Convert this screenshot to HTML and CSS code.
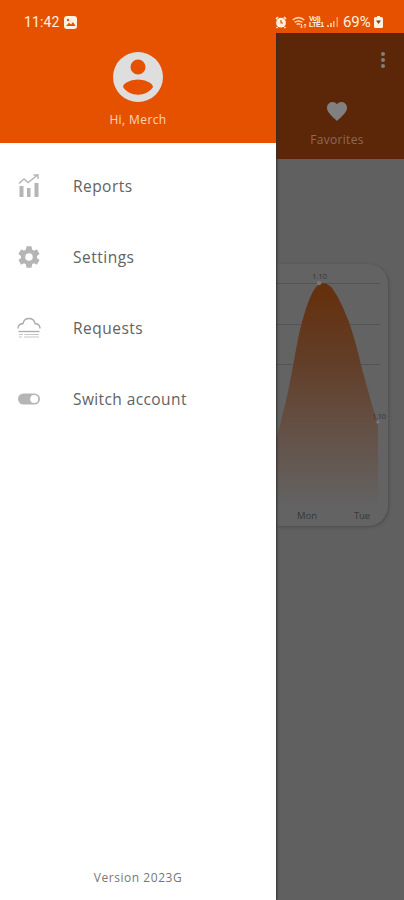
FILE: index.html
```html
<!DOCTYPE html>
<html lang="en">
<head>
<meta charset="utf-8">
<title>Menu</title>
<link rel="stylesheet" href="styles.css">
</head>
<body>
<div class="screen">
  <header class="status">
    <span class="time">11:42</span>
    <svg class="picture" width="13" height="13" viewBox="0 0 13 13"><rect width="13" height="13" rx="3" fill="#fff1df"/><path d="M2 10l3-3.2 2 1.7 2-2.5 2.5 4z" fill="#e65100"/><circle cx="4" cy="4" r="1.2" fill="#e65100"/></svg>
    <svg class="alarm" width="12" height="13" viewBox="0 0 12 13"><path d="M1 3l2-2M11 3L9 1M2.5 11L1.5 12M9.5 11l1 1" stroke="#fff1df" stroke-width="1.6"/><circle cx="6" cy="6.7" r="4.9" fill="#fff1df"/><path d="M6 4v3h2" fill="none" stroke="#e65100" stroke-width="1.2"/></svg>
    <svg class="wifi" width="15" height="13" viewBox="0 0 15 13"><g fill="none" stroke="#ffd2ae" stroke-width="1.5"><path d="M.7 4Q6.5-.8 12.3 4M2.7 6.4q3.8-3 7.6 0M4.6 8.6q1.9-1.6 3.8 0"/><path d="M9.5 8v4M8 10.5l1.5 1.5 1.3-1.5M13 12V8m-1.4 1.5L13 8l1.4 1.5" stroke-width="1"/></g></svg>
    <span class="volte"><b>Vo))</b><b>LTE1</b></span>
    <svg class="signal" width="12" height="12" viewBox="0 0 12 12"><path d="M0 11h2V9H0zM3 11h2V7H3zM6 11h1.5V5H6z" fill="#ffc18f"/><path d="M9.5 1H11v10H9.5z" fill="#f3a166"/></svg>
    <span class="percent">69%</span>
    <svg class="battery" width="9" height="12" viewBox="0 0 9 12"><path d="M3 0h3v1h1.5Q9 1 9 2.5v8Q9 12 7.5 12h-6Q0 12 0 10.5v-8Q0 1 1.5 1H3z" fill="#fff1df"/><path d="M2 4.5h5L4.5 8z" fill="#70462c"/></svg>
  </header>
  <div class="content">
    <aside class="drawer">
      <div class="profile">
        <svg width="50" height="50" viewBox="2 2 20 20"><path fill="#dedede" fill-rule="evenodd" d="M12 2a10 10 0 1 0 0 20 10 10 0 1 0 0-20zm0 3a3 3 0 1 1 0 6 3 3 0 0 1 0-6zm0 14.100c-2.500 0-4.700-1.200-6-3.100.1-1.900 4-3 6-3s5.900 1.100 6 3c-1.300 1.900-3.500 3.100-6 3.100z"/></svg>
        <span class="hello">Hi, Merch</span>
      </div>
      <nav class="menu">
        <a class="item"><svg width="24" height="24" viewBox="0 0 24 24"><path d="M2.500 12h4v11h-4zM10 14h3.500v9H10zM17.500 9h4v14h-4z" fill="#b5b5b5"/><path d="M2 9.500l5-4.500 4 3.500L20 1.500M16.500 1H21v4" fill="none" stroke="#b5b5b5" stroke-width="1.400"/></svg><span class="reports">Reports</span></a>
        <a class="item"><svg width="24" height="24" viewBox="0.750 0.750 22.500 22.500"><path fill="#b5b5b5" d="M19.430 12.980c.04-.32.070-.64.070-.98s-.03-.66-.07-.98l2.110-1.650c.19-.15.240-.42.120-.64l-2-3.460c-.12-.22-.39-.3-.61-.22l-2.490 1c-.52-.4-1.080-.73-1.690-.98l-.38-2.650C14.460 2.180 14.250 2 14 2h-4c-.25 0-.46.180-.49.420l-.38 2.650c-.61.250-1.170.59-1.690.98l-2.490-1c-.23-.09-.49 0-.61.220l-2 3.460c-.13.220-.07.490.120.640l2.110 1.650c-.04.320-.07.650-.07.980s.03.660.070.980l-2.110 1.650c-.19.150-.24.420-.12.640l2 3.460c.12.220.39.300.61.220l2.490-1c.52.400 1.080.730 1.690.980l.38 2.650c.03.240.240.420.490.420h4c.25 0 .46-.18.490-.42l.38-2.650c.61-.25 1.170-.59 1.690-.98l2.490 1c.23.090.49 0 .61-.22l2-3.460c.12-.22.070-.49-.12-.64zM12 15.500a3.500 3.500 0 1 1 0-7 3.500 3.500 0 0 1 0 7z"/></svg><span class="settings">Settings</span></a>
        <a class="item"><svg width="24" height="24" viewBox="0 0 24 24"><g fill="none" stroke="#aaa" stroke-width="1.400"><path d="M1 12.500Q1 8 6 7.500q1-5 6-5t6 5q5 .5 5 5"/><path d="M1.500 15.500h21" stroke-width="1.300"/><path d="M2 18.500h4m1.500 0H22M2 21h3m2 0h15" stroke="#c6c6c6" stroke-width="1.200"/></g></svg><span class="requests">Requests</span></a>
        <a class="item"><svg width="24" height="24" viewBox="0 0 24 24"><rect x="1" y="6.500" width="22" height="11" rx="5.500" fill="#b5b5b5"/><circle cx="17.200" cy="12" r="4" fill="#fff"/></svg><span class="switch">Switch account</span></a>
      </nav>
      <footer class="version"><span>Version 2023G</span></footer>
    </aside>
    <main class="behind">
      <div class="appbar">
        <svg class="more" width="6" height="18" viewBox="0 0 6 18"><g fill="#808080"><circle cx="3" cy="3" r="2"/><circle cx="3" cy="9" r="2"/><circle cx="3" cy="15" r="2"/></g></svg>
        <svg class="heart" width="20" height="19" viewBox="2 3 20 18.400" preserveAspectRatio="none"><path fill="#808080" d="M12 21.350l-1.450-1.320C5.400 15.360 2 12.280 2 8.500 2 5.420 4.420 3 7.500 3c1.740 0 3.410.810 4.500 2.090C13.090 3.810 14.760 3 16.500 3 19.580 3 22 5.420 22 8.500c0 3.780-3.400 6.860-8.550 11.540z"/></svg>
        <span class="favorites">Favorites</span>
      </div>
      <section class="card">
        <svg width="112" height="262" viewBox="0 0 112 262">
          <defs><linearGradient id="fade" x1="0" y1="0" x2="0" y2="1"><stop offset="0" stop-color="#652f0b"/><stop offset=".35" stop-color="#623e28"/><stop offset=".65" stop-color="#645045"/><stop offset="1" stop-color="#636363"/></linearGradient></defs>
          <path d="M0 19.500h104M0 60.500h104M0 100.500h104" stroke="#535353"/>
          <path d="M0 176C4 162 6 152 9 141C13 124 16 107 19 91C21 80 23 69 26 58Q33 32 40 23Q48 15 56 24C64 35 68 46 73 58C78 73 82 87 85 101L96 141L102 160V243H0z" fill="url(#fade)"/>
          <circle cx="43" cy="19" r="2.300" fill="#777"/><circle cx="102" cy="158" r="1.800" fill="#777"/>
          <text class="value" x="36" y="15" textLength="15">1.10</text>
          <text class="value" x="96" y="155" textLength="14">1.10</text>
          <text class="day" x="21" y="255" textLength="20">Mon</text>
          <text class="day" x="78" y="255" textLength="16">Tue</text>
        </svg>
      </section>
    </main>
  </div>
</div>
</body>
</html>
```
FILE: styles.css
```css
* { box-sizing: border-box; }
body { margin: 0; font-family: "Open Sans", "Noto Sans", sans-serif; }
svg { display: block; flex: none; }
.screen { width: 404px; height: 900px; display: flex; flex-direction: column; overflow: hidden; background: #e65100; }
.status { height: 33px; flex: none; display: flex; align-items: center; padding: 11px 0 0 24px; color: #fff1df; line-height: 22px; }
.time { width: 40px; font: 14px/22px Roboto, sans-serif; letter-spacing: .1px; }
.alarm { margin-left: 198px; }
.wifi { margin-left: 5px; }
.volte { width: 17px; margin-left: 2px; display: flex; flex-direction: column; font: 7px/6px "Liberation Sans", sans-serif; letter-spacing: -.5px; }
.signal { margin-left: 1px; }
.percent { width: 31px; margin-left: 4px; font: 15px/22px Roboto, sans-serif; letter-spacing: -.1px; }
.content { flex: 1; display: grid; grid-template-columns: 276px 128px; }
.drawer { display: flex; flex-direction: column; background: #fff; z-index: 1; box-shadow: 1px 0 2px #303030; clip-path: inset(0 -5px 0 0); }
.profile { height: 110px; flex: none; display: flex; flex-direction: column; align-items: center; padding-top: 19px; background: #e65100; color: #fbd6bd; }
.hello { margin-top: 9px; font-size: 12px; line-height: 18px; letter-spacing: .4px; }
.menu { padding-top: 8px; }
.item { height: 71px; display: flex; align-items: center; padding-left: 17px; gap: 32px; font-size: 15.5px; line-height: 22px; color: #626262; }
.item svg { margin-bottom: 1px; }
.item span { margin-bottom: 2px; }
.reports { letter-spacing: .45px; }
.settings { letter-spacing: .5px; }
.requests { letter-spacing: .5px; }
.switch { letter-spacing: .4px; }
.version { margin-top: auto; padding-bottom: 13px; text-align: center; font-size: 12px; line-height: 18px; letter-spacing: .55px; color: #777; }
.behind { background: #606060; }
.appbar { height: 126px; display: flex; flex-direction: column; align-items: center; padding-top: 18px; background: #5c2709; color: #8a6a58; }
.more { align-self: flex-end; margin-right: 18px; }
.heart { margin: 33px 6px 0 0; }
.favorites { margin: 10px 6px 0 0; font-size: 12px; line-height: 18px; letter-spacing: .3px; }
.card { width: 112px; height: 262px; margin-top: 105px; background: #636363; border-radius: 0 20px 20px 0; box-shadow: 1px 1px 3px #4c4c4c; }
.value { font-size: 8px; fill: #383838; }
.day { font-size: 9.5px; fill: #383838; }
```
